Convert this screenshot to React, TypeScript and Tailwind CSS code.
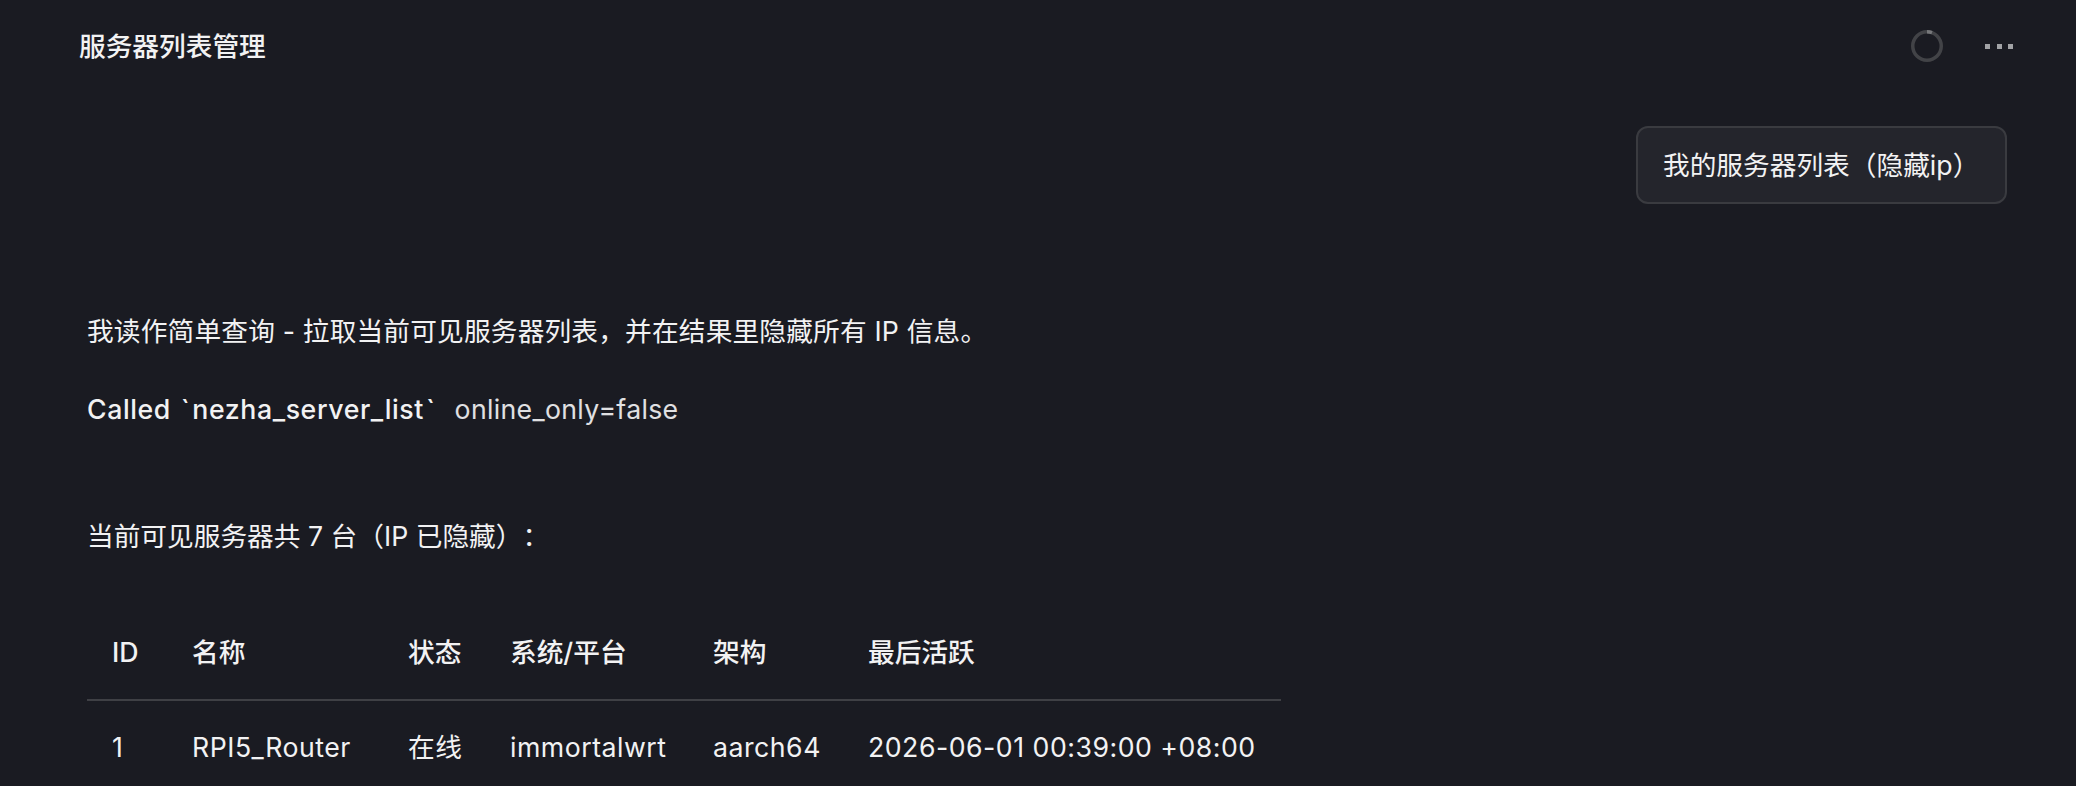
const root =
  "font-['Inter','Noto_Sans_CJK_SC',sans-serif] [text-spacing-trim:space-all]";

const columns = [
  { label: "ID", value: "1", width: "w-[80px]" },
  { label: "名称", value: "RPI5_Router", width: "w-[216px]" },
  { label: "状态", value: "在线", width: "w-[102px]" },
  { label: "系统/平台", value: "immortalwrt", width: "w-[203px]" },
  { label: "架构", value: "aarch64", width: "w-[155px]" },
  { label: "最后活跃", value: "2026-06-01 00:39:00 +08:00", width: "w-[438px]" },
];

function Spinner() {
  return (
    <svg width="32" height="32" viewBox="0 0 32 32" fill="none">
      <circle cx="16" cy="16" r="14.25" stroke="#424347" strokeWidth="3.5" />
      <path d="M16 1.75a14.25 14.25 0 0 1 5 .9" stroke="#76777a" strokeWidth="3.5" />
    </svg>
  );
}

function Dots() {
  return (
    <div className="flex items-center gap-[6.5px]">
      <span className="h-[5px] w-[5px] bg-[#a2a3a6]" />
      <span className="h-[5px] w-[5px] bg-[#a2a3a6]" />
      <span className="h-[5px] w-[5px] bg-[#a2a3a6]" />
    </div>
  );
}

export default function App() {
  return (
    <div className={`${root} h-[786px] w-[2076px] overflow-hidden bg-[#1a1b22] text-[26.7px] text-[#f2f2f3]`}>
      <header className="flex h-[92px] items-center justify-between pl-[79px] pr-[63px]">
        <h1 className="text-[26.7px] font-medium">服务器列表管理</h1>
        <div className="flex items-center gap-[42px]">
          <Spinner />
          <Dots />
        </div>
      </header>

      <div className="flex justify-end pr-[69px] pt-[34px]">
        <div className="flex h-[78px] w-[371px] items-center rounded-[12px] border-2 border-[#3a3b40] bg-[#24252c] pl-[25px]">
          我的服务器列表（隐藏ip）
        </div>
      </div>

      <div className="pl-[87px] pt-[107px]">
        <p className="h-[40px] leading-[40px] tracking-[0.17px]">我读作简单查询 - 拉取当前可见服务器列表，并在结果里隐藏所有 IP 信息。</p>
        <p className="mt-[38px] h-[40px] leading-[40px]">
          <span className="font-medium tracking-[0.6px]">
            Called <span className="px-[2px]">`</span>nezha_server_list<span className="px-[2px]">`</span>
          </span>
          <span className="ml-[17px] tracking-[0.3px] text-[#e0e0e2]">online_only=false</span>
        </p>
        <p className="mt-[87px] h-[40px] leading-[40px]">当前可见服务器共 7 台（IP 已隐藏）：</p>

        <table className="mt-[50px] w-[1194px] table-fixed border-collapse">
          <thead>
            <tr className="h-[94px] border-b-2 border-[#3f4045]">
              {columns.map((c) => (
                <th key={c.label} className={`${c.width} pl-[25px] text-left font-medium`}>
                  {c.label}
                </th>
              ))}
            </tr>
          </thead>
          <tbody>
            <tr className="h-[94px]">
              {columns.map((c) => (
                <td key={c.label} className="pl-[25px] whitespace-nowrap tracking-[0.5px]">
                  {c.value}
                </td>
              ))}
            </tr>
          </tbody>
        </table>
      </div>
    </div>
  );
}
